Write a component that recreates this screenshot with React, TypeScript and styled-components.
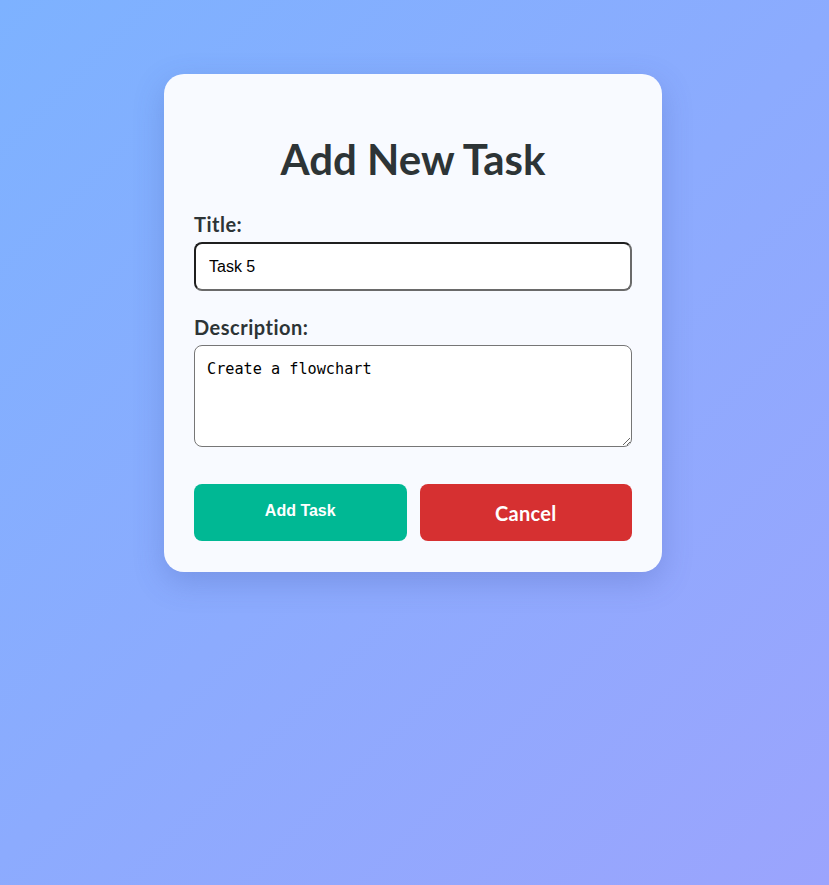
import styled, { createGlobalStyle } from "styled-components";

const GlobalStyle = createGlobalStyle`
  html, body {
    margin: 0;
    padding: 0;
  }
  body {
    min-height: 885px;
    background: linear-gradient(135deg, #7db2ff 0%, #9ba4fd 100%);
    font-family: Lato, "Open Sans", sans-serif;
    font-variant-ligatures: none;
  }
`;

const Page = styled.div`
  display: flex;
  justify-content: center;
  padding: 74px 3px 0 0;
`;

const Card = styled.form`
  width: 498px;
  box-sizing: border-box;
  padding: 32px 30px 31px;
  background: #f8faff;
  border-radius: 20px;
  box-shadow: 0 10px 30px rgba(60, 80, 160, 0.25);
  display: flex;
  flex-direction: column;
`;

const Heading = styled.h2`
  margin: 28px 0 28px;
  text-align: center;
  font-size: 42px;
  line-height: 50px;
  font-weight: 700;
  color: #2d3436;
`;

const Field = styled.div`
  display: flex;
  flex-direction: column;
  margin-bottom: 24px;
`;

const Label = styled.label`
  font-size: 20px;
  line-height: 24px;
  letter-spacing: 0.5px;
  font-weight: 700;
  color: #2d3436;
  margin-bottom: 6px;
`;

const TextInput = styled.input`
  box-sizing: border-box;
  height: 49px;
  padding: 0 13px;
  border: 2px solid #1f1f1f;
  border-right-color: #6a6a6a;
  border-bottom-color: #6a6a6a;
  border-radius: 8px;
  background: #fff;
  font-family: "Liberation Sans", Arial, sans-serif;
  font-size: 16px;
  color: #000;
  outline: none;
`;

const TextArea = styled.textarea`
  box-sizing: border-box;
  height: 102px;
  padding: 14px 12px;
  border: 1px solid #767676;
  border-radius: 8px;
  background: #fff;
  font-family: "DejaVu Sans Mono", monospace;
  font-size: 15.2px;
  color: #000;
`;

const Actions = styled.div`
  display: flex;
  gap: 13px;
  margin-top: 13px;
`;

const Button = styled.button<{ $tone: "add" | "cancel" }>`
  flex: 1;
  height: 57px;
  border: none;
  border-radius: 8px;
  color: #fff;
  font-weight: 700;
  cursor: pointer;
  background: ${(p) => (p.$tone === "add" ? "#00b894" : "#d63031")};
  font-family: ${(p) =>
    p.$tone === "add" ? '"Liberation Sans", Arial, sans-serif' : 'Lato, "Open Sans", sans-serif'};
  font-size: ${(p) => (p.$tone === "add" ? "16px" : "20px")};
  letter-spacing: ${(p) => (p.$tone === "add" ? "0" : "0.3px")};
  padding: ${(p) => (p.$tone === "add" ? "0 0 3px" : "0")};
`;

const App = () => {
  return (
    <>
      <GlobalStyle />
      <Page>
        <Card onSubmit={(e) => e.preventDefault()}>
          <Heading>Add New Task</Heading>
          <Field>
            <Label htmlFor="title">Title:</Label>
            <TextInput id="title" defaultValue="Task 5" />
          </Field>
          <Field>
            <Label htmlFor="description">Description:</Label>
            <TextArea id="description" defaultValue="Create a flowchart" />
          </Field>
          <Actions>
            <Button type="submit" $tone="add">Add Task</Button>
            <Button type="button" $tone="cancel">Cancel</Button>
          </Actions>
        </Card>
      </Page>
    </>
  );
};

export default App;
